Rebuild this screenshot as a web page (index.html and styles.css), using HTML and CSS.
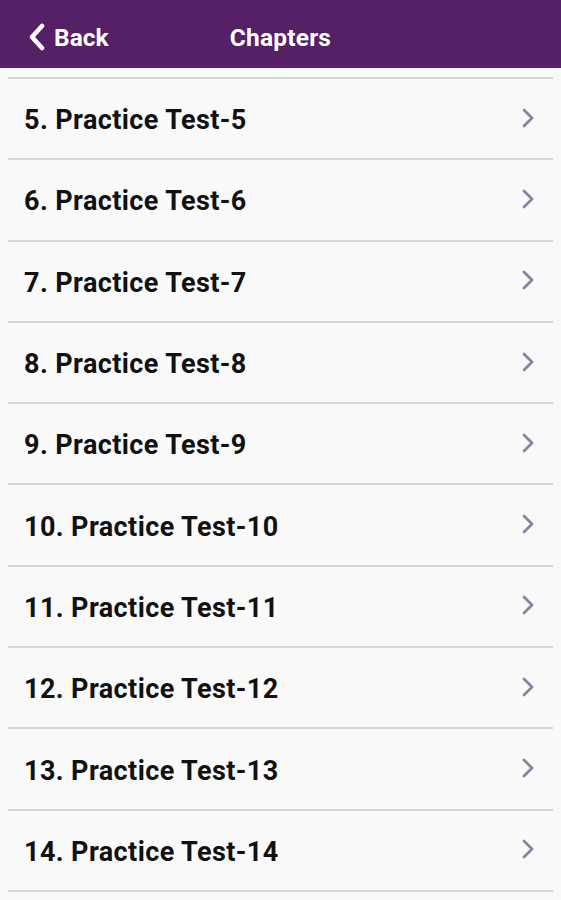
FILE: index.html
```html
<!DOCTYPE html>
<html>
<head>
<meta charset="utf-8">
<link rel="stylesheet" href="styles.css">
</head>
<body>
<header class="topbar">
  <div class="back">
    <svg class="back-icon" width="18" height="28" viewBox="0 0 18 28"><path d="M14 3 L4 14 L14 25" fill="none" stroke="#fff" stroke-width="4.5" stroke-linecap="round" stroke-linejoin="round"/></svg>
    <span>Back</span>
  </div>
  <div class="title">Chapters</div>
</header>
<main class="list">
  <div class="row"><span>5. Practice Test-5</span><svg class="chev" width="14" height="22" viewBox="0 0 14 22"><path d="M3 3 L11 11 L3 19" fill="none" stroke="#8585a3" stroke-width="2.8" stroke-linecap="round" stroke-linejoin="round"/></svg></div>
  <div class="row"><span>6. Practice Test-6</span><svg class="chev" width="14" height="22" viewBox="0 0 14 22"><path d="M3 3 L11 11 L3 19" fill="none" stroke="#8585a3" stroke-width="2.8" stroke-linecap="round" stroke-linejoin="round"/></svg></div>
  <div class="row"><span>7. Practice Test-7</span><svg class="chev" width="14" height="22" viewBox="0 0 14 22"><path d="M3 3 L11 11 L3 19" fill="none" stroke="#8585a3" stroke-width="2.8" stroke-linecap="round" stroke-linejoin="round"/></svg></div>
  <div class="row"><span>8. Practice Test-8</span><svg class="chev" width="14" height="22" viewBox="0 0 14 22"><path d="M3 3 L11 11 L3 19" fill="none" stroke="#8585a3" stroke-width="2.8" stroke-linecap="round" stroke-linejoin="round"/></svg></div>
  <div class="row"><span>9. Practice Test-9</span><svg class="chev" width="14" height="22" viewBox="0 0 14 22"><path d="M3 3 L11 11 L3 19" fill="none" stroke="#8585a3" stroke-width="2.8" stroke-linecap="round" stroke-linejoin="round"/></svg></div>
  <div class="row"><span>10. Practice Test-10</span><svg class="chev" width="14" height="22" viewBox="0 0 14 22"><path d="M3 3 L11 11 L3 19" fill="none" stroke="#8585a3" stroke-width="2.8" stroke-linecap="round" stroke-linejoin="round"/></svg></div>
  <div class="row"><span>11. Practice Test-11</span><svg class="chev" width="14" height="22" viewBox="0 0 14 22"><path d="M3 3 L11 11 L3 19" fill="none" stroke="#8585a3" stroke-width="2.8" stroke-linecap="round" stroke-linejoin="round"/></svg></div>
  <div class="row"><span>12. Practice Test-12</span><svg class="chev" width="14" height="22" viewBox="0 0 14 22"><path d="M3 3 L11 11 L3 19" fill="none" stroke="#8585a3" stroke-width="2.8" stroke-linecap="round" stroke-linejoin="round"/></svg></div>
  <div class="row"><span>13. Practice Test-13</span><svg class="chev" width="14" height="22" viewBox="0 0 14 22"><path d="M3 3 L11 11 L3 19" fill="none" stroke="#8585a3" stroke-width="2.8" stroke-linecap="round" stroke-linejoin="round"/></svg></div>
  <div class="row"><span>14. Practice Test-14</span><svg class="chev" width="14" height="22" viewBox="0 0 14 22"><path d="M3 3 L11 11 L3 19" fill="none" stroke="#8585a3" stroke-width="2.8" stroke-linecap="round" stroke-linejoin="round"/></svg></div>
</main>
</body>
</html>
```
FILE: styles.css
```css
* { box-sizing: border-box; }
html, body { margin: 0; padding: 0; }
body {
  background: #f9f9f9;
  font-family: Roboto, "Liberation Sans", sans-serif;
  width: 561px;
  height: 900px;
  overflow: hidden;
}
.topbar {
  height: 68px;
  background: #552066;
  display: grid;
  grid-template-columns: 1fr auto 1fr;
  align-items: center;
  padding-top: 7px;
  color: #fff;
}
.back {
  grid-column: 1;
  display: flex;
  align-items: center;
  padding-left: 28px;
  gap: 8px;
  font-size: 24.5px;
  font-weight: 700;
}
.back-icon { display: block; margin-top: -1px; }
.title {
  grid-column: 2;
  font-size: 24.5px;
  font-weight: 700;
  letter-spacing: 0.2px;
}
.list {
  padding-top: 9px;
}
.row {
  height: 81.3px;
  margin: 0 8px;
  border-top: 2px solid #d6d6d6;
  display: flex;
  align-items: center;
  justify-content: space-between;
  padding: 0 18px 0 16px;
  font-size: 27px;
  font-weight: 700;
  letter-spacing: 0.4px;
  color: #111;
}
.row span { margin-top: 3px; }
.row:last-child { border-bottom: 2px solid #d6d6d6; height: 83.3px; }
.chev { display: block; margin-top: -2px; }
```
